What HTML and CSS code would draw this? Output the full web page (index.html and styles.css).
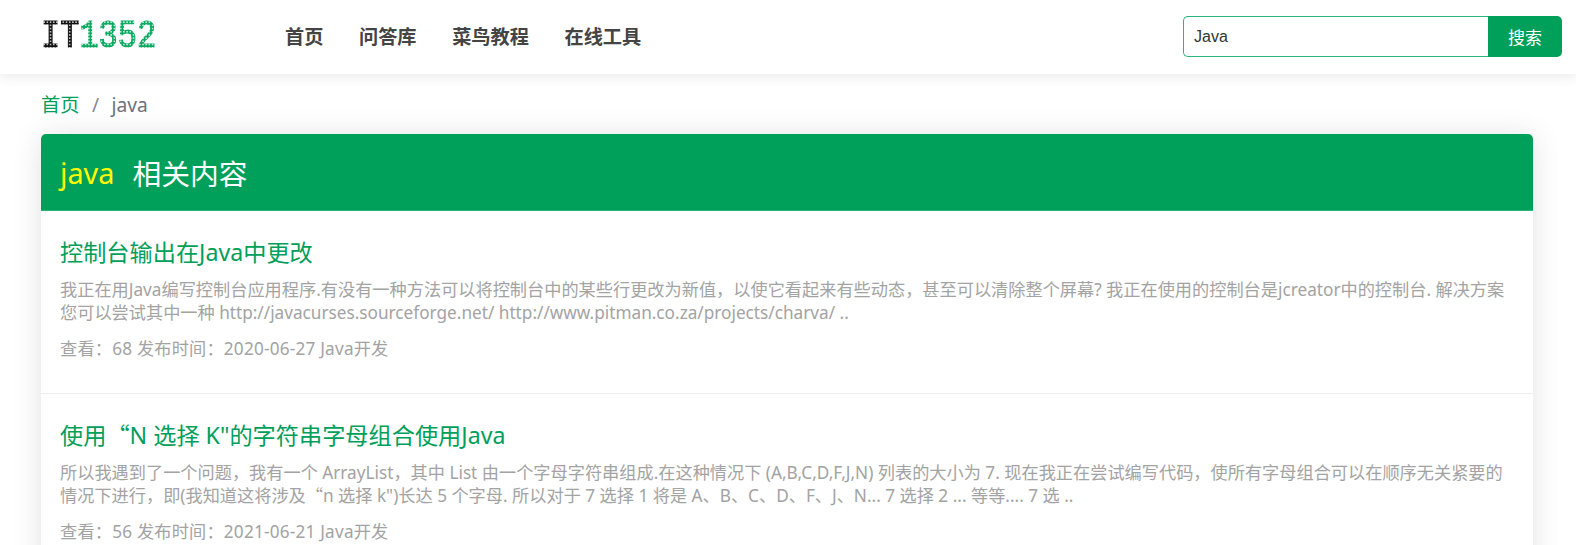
FILE: index.html
```html
<!DOCTYPE html>
<html lang="zh-CN">
<head>
<meta charset="utf-8">
<title>java 相关内容 - IT1352</title>
<link rel="stylesheet" href="styles.css">
</head>
<body>
<header class="topbar">
  <a class="logo" href="#"><span class="logo-text"><span class="logo-it">IT</span><span class="logo-num">1352</span></span></a>
  <nav class="nav">
    <a href="#">首页</a>
    <a href="#">问答库</a>
    <a href="#">菜鸟教程</a>
    <a href="#">在线工具</a>
  </nav>
  <form class="search">
    <input class="search-input" type="text" value="Java">
    <button class="search-btn" type="button">搜索</button>
  </form>
</header>
<main class="page">
  <div class="crumbs"><a href="#">首页</a><span class="sep">/</span><span class="cur">java</span></div>
  <section class="card">
    <h1 class="card-head"><span class="kw">java</span>相关内容</h1>
    <article class="item">
      <h2><a href="#">控制台输出在Java中更改</a></h2>
      <p class="desc">我正在用Java编写控制台应用程序.有没有一种方法可以将控制台中的某些行更改为新值，以使它看起来有些动态，甚至可以清除整个屏幕? 我正在使用的控制台是jcreator中的控制台. 解决方案<br>您可以尝试其中一种 http://javacurses.sourceforge.net/ http://www.pitman.co.za/projects/charva/ ..</p>
      <p class="meta">查看：68 发布时间：2020-06-27 Java开发</p>
    </article>
    <article class="item">
      <h2><a href="#">使用<span class="cjk">“</span>N 选择 K"的字符串字母组合使用Java</a></h2>
      <p class="desc">所以我遇到了一个问题，我有一个 ArrayList，其中 List 由一个字母字符串组成.在这种情况下 (A,B,C,D,F,J,N) 列表的大小为 7. 现在我正在尝试编写代码，使所有字母组合可以在顺序无关紧要的<br>情况下进行，即(我知道这将涉及<span class="cjk">“</span>n 选择 k")长达 5 个字母. 所以对于 7 选择 1 将是 A、B、C、D、F、J、N... 7 选择 2 ... 等等.... 7 选 ..</p>
      <p class="meta">查看：56 发布时间：2021-06-21 Java开发</p>
    </article>
  </section>
</main>
</body>
</html>
```
FILE: styles.css
```css
* { box-sizing: border-box; }
html, body { margin: 0; height: 545px; overflow: hidden; }
body {
  background: #fff;
  font-family: "Noto Sans", "Noto Sans CJK SC", sans-serif;
  font-size: 16px;
  color: #858796;
}
a { text-decoration: none; }
.cjk { font-family: "Noto Sans CJK SC", sans-serif; line-height: 0; }

.topbar {
  position: relative;
  z-index: 2;
  display: flex;
  align-items: center;
  height: 74px;
  padding: 0 14px 1px 41px;
  background: #fff;
  box-shadow: 0 2px 12px rgba(58, 59, 69, .12);
}
.logo {
  display: block;
  width: 244px;
  height: 36px;
  -webkit-mask-image: radial-gradient(circle at 1.6px 1.6px, #000 1.4px, transparent 1.8px);
  -webkit-mask-size: 3.2px 3.2px;
  mask-image: radial-gradient(circle at 1.6px 1.6px, #000 1.4px, transparent 1.8px);
  mask-size: 3.2px 3.2px;
}
.logo-text {
  display: inline-block;
  font: 400 39px/36px "Liberation Mono", monospace;
  -webkit-text-stroke: 1.2px currentColor;
  white-space: nowrap;
  transform: scaleX(.82);
  transform-origin: 0 0;
}
.logo-it { color: #111; }
.logo-num { color: #0aa860; }
.nav { display: flex; gap: 35.6px; flex: 1; }
.nav a {
  color: #444;
  font-size: 19.2px;
  font-weight: 700;
  line-height: 28px;
}
.search { display: flex; width: 379px; height: 41px; }
.search-input {
  flex: 1;
  min-width: 0;
  height: 100%;
  padding: 0 10px;
  border: 1px solid #2ab57d;
  border-right: 0;
  border-radius: 5px 0 0 5px;
  outline: 0;
  color: #333;
  font: 16px "Liberation Sans", sans-serif;
}
.search-btn {
  width: 74px;
  height: 100%;
  border: 0;
  border-radius: 0 5px 5px 0;
  background: #00a05a;
  color: #fff;
  font: 17px "Noto Sans CJK SC", sans-serif;
}

.page { padding: 0 43px 0 41px; }
.crumbs {
  display: flex;
  align-items: center;
  height: 60px;
  font-size: 19.2px;
}
.crumbs a { color: #00a05a; }
.crumbs .sep { margin: 0 12.5px; }
.cur { color: #6e7180; }

.card {
  background: #fff;
  border-radius: 5px;
  box-shadow: 0 2.4px 28px rgba(58, 59, 69, .15);
}
.card-head {
  display: flex;
  align-items: center;
  height: 77px;
  margin: 0;
  padding: 0 19px;
  background: #00a05a;
  border-bottom: 1px solid #2ab57d;
  border-radius: 5px 5px 0 0;
  color: #fff;
  font-size: 28.8px;
  font-weight: 400;
}
.kw { color: #ff0; margin-right: 18px; }
.item {
  padding: 23px 19px 32px;
  border-bottom: 1px solid #edeef2;
}
.item h2 {
  margin: 0 0 8px;
  font-size: 23.2px;
  font-weight: 400;
  line-height: 36px;
}
.item h2 a { color: #00a05a; }
.desc {
  margin: 0 0 12px;
  color: #a3a3a3;
  font-size: 17.2px;
  line-height: 23.4px;
}
.meta {
  margin: 0;
  color: #a3a3a3;
  font-size: 17.2px;
  letter-spacing: .2px;
  line-height: 24px;
}
```
